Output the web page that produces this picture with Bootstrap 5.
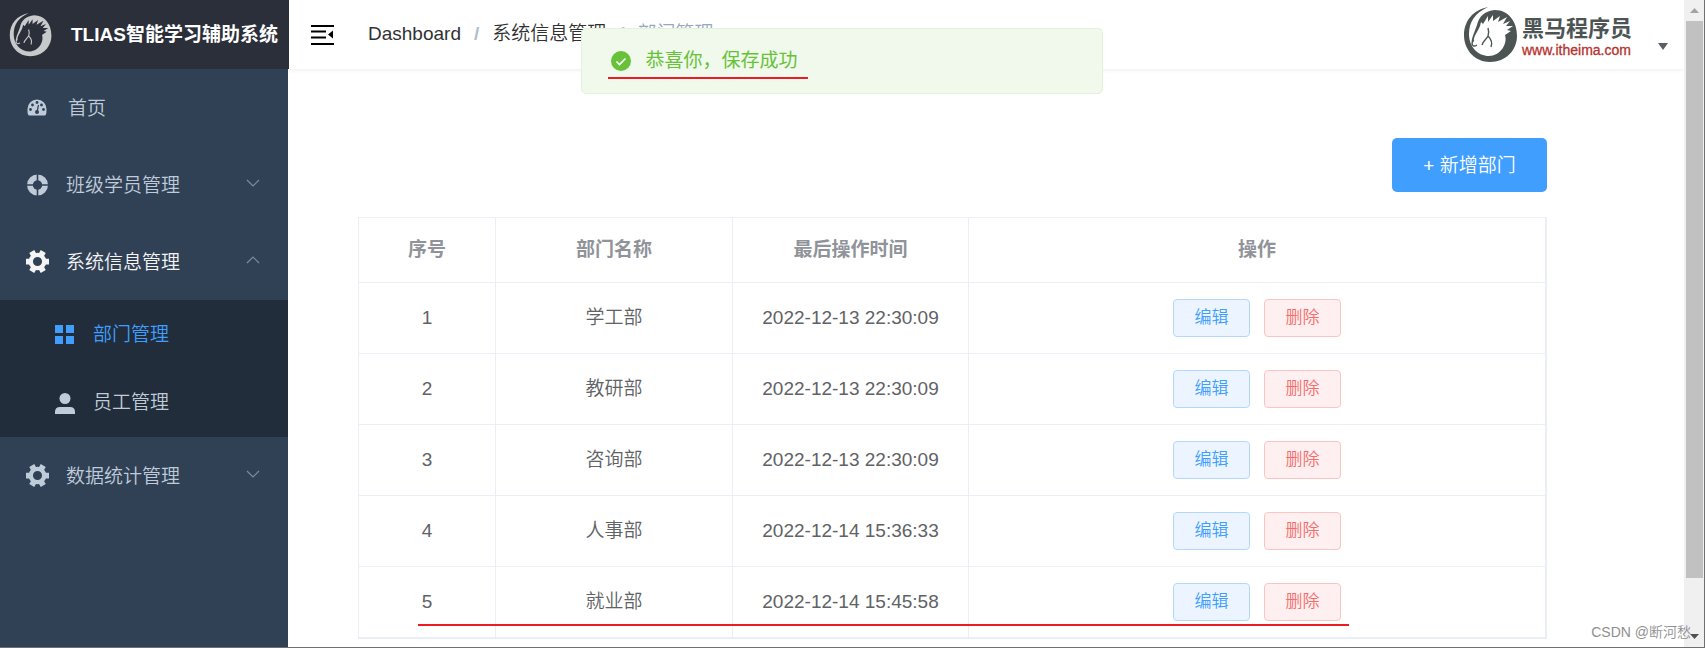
<!DOCTYPE html>
<html lang="zh-CN">
<head>
<meta charset="utf-8">
<meta name="viewport" content="width=device-width, initial-scale=1">
<title>TLIAS智能学习辅助系统</title>
<link rel="stylesheet" href="https://cdn.jsdelivr.net/npm/bootstrap@5.3.0/dist/css/bootstrap.min.css">
<style>
body { font-family: "Liberation Sans", "Noto Sans CJK SC", sans-serif; font-size: 19px; line-height: 26px; color: #606266; background: #fff; font-weight: 350; }
a { text-decoration: none; }
.app-shell { border-bottom: 1px solid #707070; }
.side { width: 288px; background: #304156; }
.side-brand { width: 289px; height: 69px; background: #2b2f3a; color: #fff; font-weight: 700; padding-left: 8px; gap: 17px; white-space: nowrap; }
.side-link { height: 77px; padding: 0 28px 0 26px; color: #bfcbd9; gap: 17px; }
.side-link span { padding-top: 3px; }
.side-link svg { flex: none; }
.side-link .chev { margin: 0 0 4px auto; }
.side-link.open { color: #f4f4f5; }
.side-home { gap: 20px; }
.side-sub { background: #212d3b; }
.side-sub a { height: 68px; padding-left: 54px; gap: 18px; color: #bfcbd9; }
.side-sub a.current { color: #409eff; height: 69px; }
.topbar { height: 69px; padding: 0 16px 0 23px; box-shadow: 0 1px 4px rgba(0,21,41,.08); }
.crumbs { --bs-breadcrumb-divider-color: #b4bccc; --bs-breadcrumb-item-padding-x: 13px; font-size: 19px; margin-left: 34px; padding-bottom: 2px; }
.crumbs a { color: #303133; }
.crumbs .active { color: #97a8be; }
.crumbs .breadcrumb-item::before { font-weight: 700; }
.bare { border: 0; background: none; padding: 0; }
.site-logo { gap: 4px; }
.site-text { min-width: 112px; padding-top: 7px; }
.site-name { color: #4c5553; font-size: 22px; line-height: 24px; font-weight: 700; }
.site-url { color: #b5322f; font-size: 14px; line-height: 18px; font-weight: 400; -webkit-text-stroke: .3px #b5322f; }
.content-area { padding: 69px 137px 8px 70px; }
.btn-add { --bs-btn-bg: #409eff; --bs-btn-color: #fff; --bs-btn-hover-bg: #66b1ff; --bs-btn-hover-color: #fff; width: 155px; height: 54px; border-radius: 5px; font-size: 19px; border: 0; margin-bottom: 25px; font-weight: 350; padding: 2px 0 0; }
.grid-wrap { border: 1px solid #ebeef5; border-right-width: 2px; border-bottom-width: 2px; }
.dept { table-layout: fixed; --bs-table-color: #606266; --bs-table-bg: transparent; margin: 0; text-align: center; vertical-align: middle; border-color: #ebeef5; border-collapse: separate; border-spacing: 0; }
.dept th, .dept td { border: 0 solid #ebeef5; border-right-width: 1px; border-bottom-width: 1px; padding: 0; height: 71px; }
.dept thead th { height: 65px; color: #909399; font-weight: 700; vertical-align: middle; }
.dept th:last-child, .dept td:last-child { border-right: 0; }
.dept tbody tr:last-child td { border-bottom: 0; height: 70px; }
.c-no { width: 137px; } .c-name { width: 237px; } .c-time { width: 236px; }
.btn-row { width: 77px; height: 38px; padding: 0; font-size: 17px; border-radius: 4px; font-weight: 350; }
.btn-edit { --bs-btn-color: #409eff; --bs-btn-bg: #ecf5ff; --bs-btn-border-color: #b3d8ff; --bs-btn-hover-bg: #409eff; --bs-btn-hover-color: #fff; }
.btn-del { --bs-btn-color: #f56c6c; --bs-btn-bg: #fef0f0; --bs-btn-border-color: #fbc4c4; --bs-btn-hover-bg: #f56c6c; --bs-btn-hover-color: #fff; }
.pair { gap: 14px; }
.underline-row { height: 2px; background: #ed1c24; left: 59px; right: 196px; bottom: 11px; }
.toast-ok { top: 28px; left: 50%; width: 522px; height: 66px; margin: 0 0 0 -272px; padding: 0 0 0 29px; gap: 15px; background: #f0f9eb; border: 1px solid #e1f3d8; border-radius: 5px; color: #67c23a; z-index: 10; font-weight: 400; }
.underline-toast { height: 2px; background: #ed1c24; left: 26px; width: 200px; top: 48px; }
.track { width: 21px; background: #f0f0f0; border-right: 1px solid #707070; padding: 0 1px 0 2px; }
.track-end { height: 21px; }
.thumb { height: 86vh; background: #c1c1c1; }
.author { right: 14px; bottom: 2px; font-size: 14px; color: #8f8f8f; z-index: 5; }
</style>
</head>
<body>
<svg width="0" height="0" class="position-absolute" aria-hidden="true">
  <defs>
    <symbol id="horse" viewBox="0 0 54 56">
      <path d="M24 0C9 3 0 14 0 28c0 16 12 27 26 27 16 0 27-12 27-26C53 14 44 3 31 3 21 4 15 9 13 18l-3 8c-2 5-3 9-2 11l2-3c-1-4 4-10 6-15l1-4 2 2 5-8v6l5-7v6l7-5-2 6 9-5-4 7 7-3-4 5 7 0-6 4 4 1-6 4c3 9-5 21-16 21C14 49 5 40 5 27 5 15 11 6 24 0z"/>
      <path d="M8 36c0 3 2 4 5 2M24 21c1 3 1 5 0 8-2 4-5 5-6 9M24 29c3 3 5 6 3 11" fill="none" stroke="currentColor" stroke-width="1.4"/>
    </symbol>
    <symbol id="gear" viewBox="0 0 24 24">
      <g stroke="currentColor" stroke-width="6"><path d="M0 12h6M18 12h6M6 1.600l3 5.200M15 17.200l3 5.200M18 1.600l-3 5.200M9 17.200l-3 5.200"/></g>
      <circle cx="12" cy="12" r="7" fill="none" stroke="currentColor" stroke-width="4.500"/>
    </symbol>
    <symbol id="down" viewBox="0 0 14 8"><path d="M1 1l6 6 6-6" fill="none" stroke="#7f8b9b" stroke-width="1.2"/></symbol>
  </defs>
</svg>
<div class="app-shell d-flex vh-100 overflow-hidden position-relative">
  <nav class="side flex-shrink-0" aria-label="主菜单">
    <div class="side-brand d-flex align-items-center position-relative">
      <svg width="46" height="44" fill="#c8c9ca" color="#c8c9ca"><use href="#horse"/></svg>
      <span>TLIAS智能学习辅助系统</span>
    </div>
    <a href="#" class="side-link side-home d-flex align-items-center">
      <svg width="22" height="22" viewBox="0 0 22 22" fill="#bfcbd9"><path d="M11 2.500a9.500 9.500 0 00-9.500 9.500c0 2 0 4 .5 5.500q.5 1 1.500 1h15q1 0 1.500-1c.5-1.500.5-3.500.5-5.500A9.500 9.500 0 0011 2.500z"/><g fill="#304156"><circle cx="11" cy="5.500" r="1.400"/><circle cx="6.500" cy="8" r="1.400"/><circle cx="15.500" cy="8" r="1.400"/><circle cx="4.500" cy="12.500" r="1.400"/><circle cx="17.500" cy="12.500" r="1.400"/><circle cx="11" cy="15" r="2"/></g><path d="M11 15l1.500-7" stroke="#304156" stroke-width="1.200"/></svg>
      <span>首页</span></a>
    <a href="#" class="side-link d-flex align-items-center">
      <svg width="23" height="22" viewBox="0 0 22 22"><circle cx="11" cy="11" r="7.500" fill="none" stroke="#bfcbd9" stroke-width="6"/><path d="M11 0v22M0 11h22" stroke="#304156" stroke-width="1.600"/><circle cx="11" cy="11" r="4.500" fill="#304156"/></svg>
      <span>班级学员管理</span><svg class="chev" width="14" height="8"><use href="#down"/></svg></a>
    <a href="#" class="side-link open d-flex align-items-center">
      <svg width="23" height="23"><use href="#gear"/></svg>
      <span>系统信息管理</span><svg class="chev" width="14" height="8" viewBox="0 0 14 8"><path d="M1 7l6-6 6 6" fill="none" stroke="#7f8b9b" stroke-width="1.200"/></svg></a>
    <div class="side-sub">
      <a href="#" class="current d-flex align-items-center"><svg width="21" height="20" fill="#409eff"><path d="M1 0h8v8H1zM12 0h8v8h-8zM1 11h8v8H1zM12 11h8v8h-8z"/></svg>部门管理</a>
      <a href="#" class="d-flex align-items-center"><svg width="21" height="21" fill="#bfcbd9"><circle cx="11" cy="5.500" r="5.500"/><path d="M1 21v-2q0-5 5-5h10q5 0 5 5v2z"/></svg>员工管理</a>
    </div>
    <a href="#" class="side-link d-flex align-items-center">
      <svg width="23" height="23"><use href="#gear"/></svg>
      <span>数据统计管理</span><svg class="chev" width="14" height="8"><use href="#down"/></svg></a>
  </nav>
  <div class="flex-grow-1">
    <header class="topbar d-flex align-items-center">
      <button class="bare d-flex" type="button" aria-label="收起菜单"><svg width="23" height="20" viewBox="0 0 23 20"><path d="M0 1h23M0 6.500h15M0 12.500h15M0 19h23" stroke="#000" stroke-width="2"/><path d="M22 5.500v8L17 9.500z"/></svg></button>
      <nav aria-label="breadcrumb"><ol class="breadcrumb crumbs mb-0">
        <li class="breadcrumb-item"><a href="#">Dashboard</a></li>
        <li class="breadcrumb-item"><a href="#">系统信息管理</a></li>
        <li class="breadcrumb-item active" aria-current="page">部门管理</li>
      </ol></nav>
      <button class="bare ms-auto d-flex align-items-center" type="button" aria-label="用户菜单">
        <span class="site-logo d-flex align-items-center">
          <svg width="54" height="56" fill="#4c5553" color="#4c5553"><use href="#horse"/></svg>
          <span class="site-text d-flex flex-column text-start"><span class="site-name">黑马程序员</span><span class="site-url">www.itheima.com</span></span>
        </span>
        <svg class="ms-4 mt-4" width="10" height="7" fill="#5a5e66"><path d="M0 0h10L5 7z"/></svg>
      </button>
    </header>
    <main class="content-area">
      <div class="d-flex justify-content-end"><button class="btn btn-add" type="button">+ 新增部门</button></div>
      <div class="grid-wrap position-relative">
        <table class="table dept">
          <colgroup><col class="c-no"><col class="c-name"><col class="c-time"><col></colgroup>
          <thead><tr><th scope="col">序号</th><th scope="col">部门名称</th><th scope="col">最后操作时间</th><th scope="col">操作</th></tr></thead>
          <tbody>
            <tr><td>1</td><td>学工部</td><td>2022-12-13 22:30:09</td><td><div class="pair d-flex justify-content-center"><button class="btn btn-row btn-edit" type="button">编辑</button><button class="btn btn-row btn-del" type="button">删除</button></div></td></tr>
            <tr><td>2</td><td>教研部</td><td>2022-12-13 22:30:09</td><td><div class="pair d-flex justify-content-center"><button class="btn btn-row btn-edit" type="button">编辑</button><button class="btn btn-row btn-del" type="button">删除</button></div></td></tr>
            <tr><td>3</td><td>咨询部</td><td>2022-12-13 22:30:09</td><td><div class="pair d-flex justify-content-center"><button class="btn btn-row btn-edit" type="button">编辑</button><button class="btn btn-row btn-del" type="button">删除</button></div></td></tr>
            <tr><td>4</td><td>人事部</td><td>2022-12-14 15:36:33</td><td><div class="pair d-flex justify-content-center"><button class="btn btn-row btn-edit" type="button">编辑</button><button class="btn btn-row btn-del" type="button">删除</button></div></td></tr>
            <tr><td>5</td><td>就业部</td><td>2022-12-14 15:45:58</td><td><div class="pair d-flex justify-content-center"><button class="btn btn-row btn-edit" type="button">编辑</button><button class="btn btn-row btn-del" type="button">删除</button></div></td></tr>
          </tbody>
        </table>
        <div class="underline-row position-absolute"></div>
      </div>
    </main>
  </div>
  <div class="track flex-shrink-0 d-flex flex-column" aria-hidden="true">
    <div class="track-end d-flex align-items-center justify-content-center"><svg width="9" height="5" fill="#a3a3a3"><path d="M0 5h9L4.500 0z"/></svg></div>
    <div class="thumb"></div>
    <div class="track-end mt-auto d-flex align-items-center justify-content-center"><svg width="9" height="5" fill="#505050"><path d="M0 0h9L4.500 5z"/></svg></div>
  </div>
  <div class="toast-ok position-absolute d-flex align-items-center" role="alert">
    <svg width="20" height="20" viewBox="0 0 20 20"><circle cx="10" cy="10" r="10" fill="#67c23a"/><path d="M5.500 10.500l3 3 6-6" fill="none" stroke="#fff" stroke-width="1.600"/></svg>
    <span>恭喜你，保存成功</span>
    <div class="underline-toast position-absolute"></div>
  </div>
  <div class="author position-absolute">CSDN @断河愁</div>
</div>
<script src="https://cdn.jsdelivr.net/npm/bootstrap@5.3.0/dist/js/bootstrap.bundle.min.js"></script>
</body>
</html>
